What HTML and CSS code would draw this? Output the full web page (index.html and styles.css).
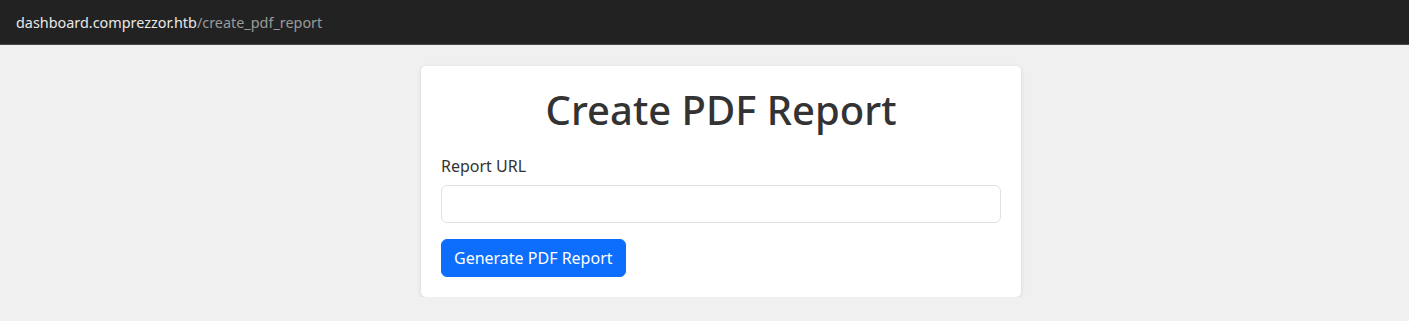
FILE: index.html
```html
<!DOCTYPE html>
<html lang="en">
<head>
<meta charset="utf-8">
<title>Create PDF Report</title>
<link rel="stylesheet" href="styles.css">
</head>
<body>
<header class="topbar">
  <span class="host">dashboard.comprezzor.htb</span><span class="path">/create_pdf_report</span>
</header>
<main class="page">
  <section class="card">
    <h1 class="title">Create PDF Report</h1>
    <form class="form">
      <label class="label" for="report_url">Report URL</label>
      <input class="input" id="report_url" type="text">
      <button class="btn" type="button">Generate PDF Report</button>
    </form>
  </section>
</main>
</body>
</html>
```
FILE: styles.css
```css
* { box-sizing: border-box; }
html, body { margin: 0; padding: 0; }
body {
  background: #f0f0f0;
  font-family: "Noto Sans", "Open Sans", sans-serif;
  color: #333;
}
.topbar {
  height: 45px;
  background: #222;
  border-bottom: 1px solid #4a4a4a;
  display: flex;
  align-items: center;
  padding-left: 16px;
  font-size: 14.4px;
}
.host { color: #e8e8e8; }
.path { color: #9a9a9a; }
.page {
  display: flex;
  justify-content: center;
  padding: 21px 0 0 33px;
}
.card {
  width: 600px;
  background: #fff;
  border-radius: 5px;
  box-shadow: 0 1px 4px rgba(0,0,0,0.12);
  padding: 20px;
}
.title {
  margin: 0 0 20px;
  text-align: center;
  font-size: 40px;
  font-weight: 500;
  line-height: 48px;
  color: #333;
}
.form { display: flex; flex-direction: column; align-items: flex-start; }
.label {
  font-size: 16px;
  line-height: 24px;
  margin-bottom: 7px;
}
.input {
  width: 100%;
  height: 38px;
  border: 1px solid #dee2e6;
  border-radius: 6px;
  margin: 0 0 16px;
  font: inherit;
}
.btn {
  height: 38px;
  padding: 0 12px;
  background: #0d6efd;
  color: #fff;
  border: 1px solid #0d6efd;
  border-radius: 6px;
  font: inherit;
  font-size: 16px;
}
```
